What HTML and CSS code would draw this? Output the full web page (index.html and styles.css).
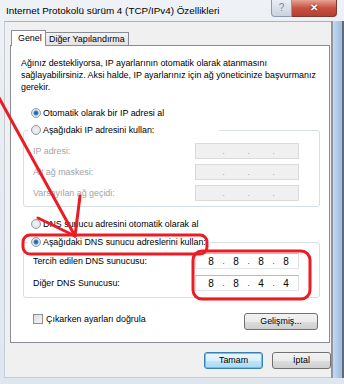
FILE: index.html
```html
<!DOCTYPE html>
<html lang="tr">
<head>
    <meta charset="UTF-8">
    <meta name="viewport" content="width=device-width, initial-scale=1.0">
    <title>Özellikler</title>
    <link rel="stylesheet" href="styles.css">
</head>
<body>
    <div class="window">
      <div class="titlebar">
        <span class="title">Internet Protokolü sürüm 4 (TCP/IPv4) Özellikleri</span>
        <div class="caption_btns">
          <span class="btn_help">?</span>
          <span class="btn_close">✕</span>
        </div>
      </div>
      <div class="frame_row">
        <div class="client">
          <div class="tabs">
            <div class="tab tab_active">Genel</div>
            <div class="tab">Diğer Yapılandırma</div>
          </div>
          <div class="panel">
            <p class="intro">Ağınız destekliyorsa, IP ayarlarının otomatik olarak atanmasını<br>sağlayabilirsiniz. Aksi halde, IP ayarlarınız için ağ yöneticinize başvurmanız<br>gerekir.</p>

            <div class="opt opt_first"><span class="radio radio_on"></span>Otomatik olarak bir IP adresi al</div>
            <div class="group group_ip">
              <div class="opt legend legend_ip"><span class="radio"></span>Aşağıdaki IP adresini kullan:</div>
              <div class="row disabled"><span>IP adresi:</span><span class="ipbox"><b></b><i>.</i><b></b><i>.</i><b></b><i>.</i><b></b></span></div>
              <div class="row disabled"><span>Alt ağ maskesi:</span><span class="ipbox"><b></b><i>.</i><b></b><i>.</i><b></b><i>.</i><b></b></span></div>
              <div class="row disabled"><span>Varsayılan ağ geçidi:</span><span class="ipbox"><b></b><i>.</i><b></b><i>.</i><b></b><i>.</i><b></b></span></div>
            </div>

            <div class="opt opt_dns"><span class="radio"></span>DNS sunucu adresini otomatik olarak al</div>
            <div class="group group_dns">
              <div class="opt legend legend_dns"><span class="radio radio_on"></span>Aşağıdaki DNS sunucu adreslerini kullan:</div>
              <div class="row row_dns"><span>Tercih edilen DNS sunucusu:</span><span class="ipbox ipbox_on"><b>8</b><i>.</i><b>8</b><i>.</i><b>8</b><i>.</i><b>8</b></span></div>
              <div class="row row_dns"><span>Diğer DNS Sunucusu:</span><span class="ipbox ipbox_on"><b>8</b><i>.</i><b>8</b><i>.</i><b>4</b><i>.</i><b>4</b></span></div>
            </div>

            <div class="panel_foot">
              <div class="check_row"><span class="checkbox"></span>Çıkarken ayarları doğrula</div>
              <div class="button btn_adv">Gelişmiş...</div>
            </div>
          </div>
          <div class="dialog_btns">
            <div class="button btn_default">Tamam</div>
            <div class="button">İptal</div>
          </div>
        </div>
        <div class="side_frame"></div>
      </div>

      <!-- red marker drawn over the screenshot -->
      <svg class="marks" width="344" height="384" viewBox="0 0 344 384">
        <g fill="none" stroke="#ec1c24" stroke-width="3" stroke-linecap="round" stroke-linejoin="round">
          <path d="M-2 96 L75 236"/>
          <path d="M38 218 L75 236"/>
          <path d="M80 196 L75 236"/>
          <rect x="23" y="235" width="184" height="19" rx="7"/>
          <rect x="193" y="251" width="117" height="48" rx="9"/>
        </g>
      </svg>
    </div>
</body>
</html>
```

FILE: styles.css
```css
*{
  box-sizing: border-box;
}
body{
  margin: 0;
  font-family: "Liberation Sans", Arial, sans-serif;
  font-size: 8.9px;
  color: #000;
}
.window{
  position: relative;
  width: 344px;
  height: 384px;
  overflow: hidden;
  background: linear-gradient(to bottom, #eef1f5, #dfe6ee);
}
.titlebar{
  height: 21px;
  display: flex;
  justify-content: space-between;
}
.title{
  padding: 5px 0 0 6px;
  font-size: 9.9px;
  line-height: 12px;
  white-space: nowrap;
}
.caption_btns{
  display: flex;
  margin-right: 7px;
  height: 17px;
}
.btn_help{
  width: 21px;
  border: 1px solid #8b9aae;
  border-top: 0;
  border-radius: 0 0 0 4px;
  background: linear-gradient(to bottom, #e9eef5, #c8d3e0);
  color: #7d8895;
  font-size: 10px;
  text-align: center;
  line-height: 15px;
}
.btn_close{
  width: 45px;
  border: 1px solid #7a3a34;
  border-top: 0;
  border-left: 0;
  border-radius: 0 0 4px 0;
  background: linear-gradient(to bottom, #e8a393, #c75243 50%, #b63f30);
  color: #fff;
  font-size: 10px;
  font-weight: bold;
  text-align: center;
  line-height: 15px;
  text-shadow: 0 0 2px #4a1a14;
}
.frame_row{
  display: flex;
  margin-left: 4px;
  height: 357px;
}
.client{
  width: 327px;
  background-color: #f0f0f0;
  border-top: 1px solid #a9b3be;
  border-left: 1px solid #c4ccd5;
  border-bottom: 1px solid #c4ccd5;
}
.side_frame{
  width: 13px;
  border-left: 2px solid #8e969f;
  background: linear-gradient(to right, #c7daf0, #a8c6e6 60%, #9dbde0);
  border-right: 2px solid #5f6a75;
}
.tabs{
  display: flex;
  height: 23px;
  padding: 7px 0 0 6px;
  align-items: flex-end;
}
.tab{
  position: relative;
  height: 13px;
  padding: 0 3px;
  border: 1px solid #898c95;
  border-bottom: 0;
  border-left: 0;
  background: linear-gradient(to bottom, #f2f2f2, #e3e3e3);
  line-height: 13px;
  white-space: nowrap;
}
.tab_active{
  height: 16px;
  width: 35px;
  padding: 0 6px;
  border-left: 1px solid #898c95;
  background: #fff;
  line-height: 15px;
  margin-bottom: -1px;
  z-index: 1;
}
.panel{
  margin-left: 5px;
  width: 320px;
  height: 298px;
  border: 1px solid #898c95;
  background: #fff;
  padding: 11px 10px 0 10px;
}
.intro{
  margin: 0;
  line-height: 12px;
  white-space: nowrap;
}
.opt{
  display: flex;
  align-items: center;
  height: 14px;
  padding-left: 10px;
  white-space: nowrap;
}
.opt_first{
  margin-top: 13px;
}
.radio{
  width: 10px;
  height: 10px;
  margin-right: 2px;
  border: 1px solid #8f9aa5;
  border-radius: 50%;
  background: radial-gradient(circle, #f4f4f4, #dcdcdc);
  flex-shrink: 0;
}
.radio_on{
  background: radial-gradient(circle, #1f4f8a 0, #3f86c6 2px, #dbe9f7 3px, #e8e8e8 5px);
}
.group{
  margin-left: 2px;
  width: 297px;
  border: 1px solid #d5dfe5;
  border-radius: 3px;
  padding: 0 20px 5px 9px;
}
.group_ip{
  margin-top: 10px;
}
.group_dns{
  margin-top: 11px;
  padding-bottom: 6px;
}
.legend{
  margin: -8px 0 0 -5px;
  background: #fff;
  padding-left: 3px;
}
.legend_ip{
  width: 191px;
}
.legend_dns{
  width: 182px;
}
.opt_dns{
  margin-top: 10px;
}
.row{
  display: flex;
  justify-content: space-between;
  align-items: center;
  height: 16px;
  margin-top: 5px;
  white-space: nowrap;
}
.row:nth-child(2){
  margin-top: 6px;
}
.row_dns{
  margin-top: 6px;
}
.row_dns:nth-child(2){
  margin-top: 4px;
}
.disabled{
  color: #a3a3a3;
}
.ipbox{
  display: flex;
  align-items: center;
  width: 104px;
  height: 16px;
  padding-left: 9px;
  border: 1px solid #dadada;
  background: #f0f0f0;
  color: #8a8a8a;
}
.ipbox b{
  width: 12px;
  text-align: center;
  font-weight: normal;
  font-size: 10px;
}
.ipbox i{
  width: 13px;
  text-align: center;
  font-style: normal;
  font-size: 8px;
}
.ipbox_on{
  border-color: #b5bcc7 #dde1e6 #e3e6ea #dde1e6;
  background: #fff;
  color: #000;
}
.panel_foot{
  display: flex;
  justify-content: space-between;
  margin-top: 14px;
}
.check_row{
  display: flex;
  align-items: center;
  height: 14px;
  padding-left: 12px;
}
.checkbox{
  width: 10px;
  height: 10px;
  margin-right: 3px;
  border: 1px solid #8f8f8f;
  background: linear-gradient(135deg, #dcdcdc, #f6f6f6);
}
.button{
  width: 59px;
  height: 17px;
  border: 1px solid #707070;
  border-radius: 3px;
  background: linear-gradient(to bottom, #f2f2f2 0, #ebebeb 50%, #dddddd 51%, #cfcfcf);
  text-align: center;
  line-height: 15px;
}
.btn_adv{
  width: 74px;
  margin: 1px 1px 0 0;
}
.dialog_btns{
  display: flex;
  justify-content: flex-end;
  gap: 9px;
  padding: 9px 0 0 0;
}
.btn_default{
  border-color: #3c7fb1;
  background: linear-gradient(to bottom, #eaf6fd 0, #d9f0fc 50%, #bee6fd 51%, #a7d9f5);
  box-shadow: inset 0 0 0 1px #48d1ff;
}
.marks{
  position: absolute;
  left: 0;
  top: 0;
  pointer-events: none;
}
```
